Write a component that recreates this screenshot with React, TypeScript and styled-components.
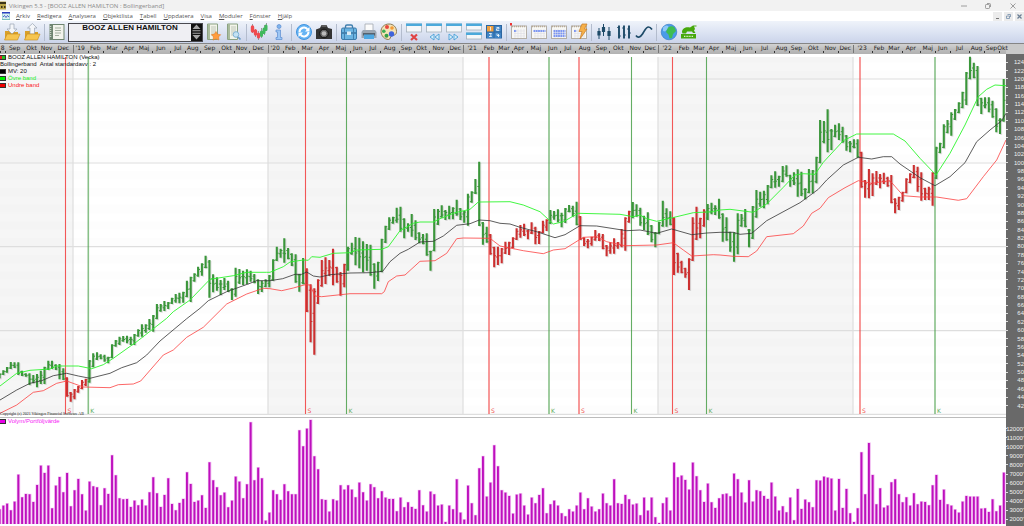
import React from "react";
import styled, { createGlobalStyle, css } from "styled-components";

const GlobalStyle = createGlobalStyle`
  *, *::before, *::after { box-sizing: border-box; }
  html, body { margin: 0; padding: 0; }
  body { background: #fff; font-family: Roboto, "Liberation Sans", sans-serif; font-size: 6px; overflow: hidden; }
  button, input { font: inherit; margin: 0; padding: 0; border: 0; background: none; color: inherit; }
`;

/* ---------- shell ---------- */

const Shell = styled.div`
  display: flex;
  flex-direction: column;
  height: 100vh;
  min-height: 400px;
`;

const TitleBar = styled.header`
  display: flex;
  align-items: center;
  flex: 0 0 11px;
  background: #f2f2f2;
  color: #8a8a8a;
`;

const AppTitle = styled.h1`
  flex: 1;
  margin: 0 0 0 2px;
  font-family: "Open Sans", sans-serif;
  font-size: 6px;
  line-height: 10px;
  font-weight: 400;
  white-space: nowrap;
`;

const WindowButtons = styled.div`
  display: flex;
  padding-right: 5px;
`;

const WindowButton = styled.button`
  display: grid;
  place-items: center;
  width: 24px;
  height: 10px;

  &:last-child { width: 12px; margin-left: 7px; }
`;

const MenuBar = styled.nav`
  display: flex;
  align-items: center;
  flex: 0 0 10px;
  background: #fff;
  padding-left: 2px;
`;

const Menus = styled.div`
  display: flex;
  flex: 1;
  gap: 7px;
  margin-left: 6px;
`;

const MenuButton = styled.button`
  font-family: "Open Sans", sans-serif;
  font-size: 6px;
  line-height: 10px;
  color: #555;
  white-space: nowrap;

  &::first-letter { text-decoration: underline; }
`;

const ChildButtons = styled.div`
  display: flex;
  gap: 2px;
`;

const ChildButton = styled.button`
  display: grid;
  place-items: center;
  width: 9px;
  height: 9px;
  background: #ececec;
`;

/* ---------- toolbar ---------- */

const ToolBar = styled.div`
  display: flex;
  align-items: center;
  flex: 0 0 22px;
  padding-left: 2px;
  background: linear-gradient(#eff3fa, #dde4f3 50%, #cbd4ea);
`;

const ToolButton = styled.button`
  display: grid;
  place-items: center;
  flex: 0 0 20px;
  height: 20px;
`;

const Separator = styled.span`
  flex: 0 0 1px;
  height: 17px;
  margin: 0 2px;
  background: #b3bccd;
`;

const ObjectPicker = styled.div`
  display: flex;
  flex: 0 0 135px;
  height: 19px;
  margin: 0 1px;
  border: 1px solid #4a4a50;
`;

const ObjectField = styled.input`
  flex: 1;
  min-width: 0;
  padding: 0 0 9px;
  background: #efeff3;
  font-family: "Liberation Sans", sans-serif;
  font-size: 8px;
  font-weight: 700;
  color: #111;
  text-align: center;
`;

const Stepper = styled.div`
  display: flex;
  flex-direction: column;
  flex: 0 0 11px;
  background: #111;
`;

const StepButton = styled.button`
  display: grid;
  place-items: center;
  flex: 1;
`;

/* ---------- time scale ---------- */

const TimeScale = styled.div`
  display: flex;
  flex: 0 0 11px;
  border-top: 1px solid #858585;
  background: linear-gradient(#d2d2d2, #bababa 60%, #b2b2b2);
`;

const Months = styled.div`
  display: flex;
  flex: 1;
  min-width: 0;
`;

const Month = styled.span<{ $weeks: number; $year?: boolean }>`
  flex: ${(p) => p.$weeks} 1 0;
  min-width: 0;
  display: flex;
  justify-content: center;
  position: relative;
  font-family: "DejaVu Sans", sans-serif;
  font-size: 6px;
  line-height: 7px;
  color: #222;
  white-space: nowrap;

  &::before {
    content: "";
    position: absolute;
    left: 0;
    bottom: 1px;
    width: 1px;
    height: 2px;
    background: #333;
    ${(p) => p.$year && css`height: 8px; background: #777;`}
  }
`;

const ScaleCorner = styled.span`
  flex: 0 0 18px;
  background: #c9c9c9;
`;

/* ---------- panels ---------- */

const Panel = styled.section<{ $share: number }>`
  display: flex;
  flex: ${(p) => p.$share} 1 0;
  min-height: 0;
`;

const Plot = styled.div`
  position: relative;
  flex: 1;
  min-width: 0;
  overflow: hidden;
  background: #fff;
`;

const Canvas = styled.svg`
  display: block;
  width: 100%;
  height: 100%;
`;

const Axis = styled.ol<{ $top: number; $bottom: number }>`
  display: flex;
  flex-direction: column;
  flex: 0 0 18px;
  margin: 0;
  padding: ${(p) => p.$top}px 0 ${(p) => p.$bottom}px;
  list-style: none;
  background: #696969;
  overflow: hidden;
`;

const AxisLabel = styled.li`
  flex: 1 1 0;
  min-height: 0;
  display: flex;
  align-items: center;
  justify-content: space-between;
  font-family: "Liberation Sans", sans-serif;
  font-size: 6px;
  line-height: 8px;
  color: #f0f0f0;

  &::before {
    content: "";
    flex: 0 1 2px;
    height: 1px;
    background: #ddd;
  }
`;

const Divider = styled.div`
  flex: 0 0 1px;
  background: linear-gradient(90deg, #bcbcbc calc(100% - 18px), #696969 calc(100% - 18px));
`;

const Legend = styled.div`
  position: absolute;
  top: 0;
  left: 0;
  font-family: "Liberation Sans", sans-serif;
  font-size: 6px;
  line-height: 7px;
`;

const LegendRow = styled.div<{ $color: string }>`
  display: flex;
  align-items: center;
  gap: 2px;
  color: ${(p) => p.$color};
  white-space: pre;
`;

const Swatch = styled.i<{ $fill: string }>`
  width: 6px;
  height: 5px;
  border: 1px solid #333;
  border-left: 0;
  background: ${(p) => p.$fill};
`;

const SignalTag = styled.span<{ $sell: boolean }>`
  position: absolute;
  bottom: 3px;
  margin-left: 2px;
  font-family: "DejaVu Sans", sans-serif;
  font-size: 6px;
  line-height: 7px;
  color: ${(p) => (p.$sell ? "#f05050" : "#60ac60")};
`;

const Copyright = styled.small`
  position: absolute;
  left: 0;
  bottom: 1px;
  font-family: "Liberation Serif", serif;
  font-size: 4px;
  line-height: 4px;
  color: #222;
  white-space: nowrap;
`;

/* ---------- data ---------- */

const WEEK = 3.747;
const FIRST = 3.3;
const xAt = (i: number) => FIRST + WEEK * i;

/* Weekly high/low in thirds of a pixel; each block has its own first week and vertical base. */
const blocks: { from: number; base: number; v: number[] }[] = [
  { from: -1, base: 230, v: [430,445,421,435,411,428,396,417,397,414,397,435,422,438,430,440,430,465,435,460,432,472,422,462,410,462,392,420,392,417,403,420,402,448,415,450,442,500,486,515,477,508,468,488,450,478,446,468,390,458,370,412,367,390,373,388,374,395,380,400,343,385,330,350,320,345,318,335,317,340,320,345,312,345,298,320,283,320,283,308,267,300,255,305,222,268,222,245,213,243,216,237,203,222,192,218,188,220,185,218,152,202,140,216,130,155,110,140,100,137,77,115,90,203,133,187,142,182,150,195,144,180,152,186,175,210,113,200,117,162,122,165,118,162,122,155,132,160,148,192,152,186,148,172,135,172] },
  { from: 72, base: 150, v: [328,392,290,333,296,323,265,338,294,328,310,348,313,398,372,425,324,403,355,486,403,577,415,614,388,462,330,410,322,402,330,378,296,406,350,398,366,437,341,412,290,362,278,314,261,346,263,355,274,367,282,362,284,377,340,416,335,393,266,367,227,279,202,240,200,221,173,218,170,245,205,265,220,245,192,260,211,270,247,280,252,283,250,317,302,362,177,304,177,225,166,203,180,210,167,208,172,208,149,197,174,210,183,218,131,227,124,158,87,132,35,228,216,284,230,278,252,314,290,352,290,345,294,340,275,312,275,315,262,295,235,270,225,263,221,258,240,268,217,252,230,283,243,282,212,250,208,243,180,222,183,209,178,217,188,232,174,219,165,187,167,200,155,226,198,270,262,288,267,295,260,287,240,272,250,273,252,298,285,319,277,311,265,311,276,296,237,292,202,302,182,218,156,205,163,200,173,227,197,240,187,255,225,277,246,292,215,253,152,230,175,230,184,226,202,375,308,368,332,370,353,383,325,420,202,333,170,270,203,265,178,230,162,210,158,193,166,195,146,206] },
  { from: 192, base: 50, v: [490,575,502,572,545,605,547,635,490,613,492,530,477,532,537,592,468,567,420,503,425,470,422,475,405,463,376,415,364,413,377,410,348,397,346,380,374,410,367,405,358,440,365,438,415,448,357,430,360,430,320,400,210,340,213,280,178,307,237,300,224,262,220,270,230,278,255,302,273,307,268,295,268,323,305,413,390,443,357,445,370,438,363,405,372,415,368,402,380,410,375,460,445,490,440,480,425,455,385,430,370,400,345,385,350,425,367,452,413,450,410,450,367,467,290,387,278,310,223,295,210,250,187,257,177,210,157,190,125,175,66,165,20,88,38,85,48,168,143,192,142,175,142,187,152,203,175,247,205,252,87,215] },
];

type Bar = { i: number; hi: number; lo: number };
const bars: Bar[] = blocks.flatMap((b) => {
  const out: Bar[] = [];
  for (let k = 0; k < b.v.length; k += 2) {
    out.push({ i: b.from + k / 2, hi: b.base + b.v[k] / 3, lo: b.base + b.v[k + 1] / 3 });
  }
  return out;
});

const sellRanges = [[17, 22], [81, 91], [130, 145], [154, 167], [179, 187], [229, 248]];
const isSell = (i: number) => sellRanges.some(([a, b]) => i >= a && i <= b);

const clamp = (v: number, a: number, b: number) => Math.max(a, Math.min(b, v));

const rangePath = (sell: boolean) =>
  bars
    .filter((b) => isSell(b.i) === sell)
    .map((b) => `M${xAt(b.i).toFixed(1)} ${b.hi.toFixed(1)}V${b.lo.toFixed(1)}`)
    .join("");

const tickPath = (sell: boolean) =>
  bars
    .map((b, n) => {
      if (isSell(b.i) !== sell) return "";
      const x = xAt(b.i);
      const prev = bars[n - 1] ?? b;
      const next = bars[n + 1] ?? b;
      const open = clamp((prev.hi + prev.lo) / 2, b.hi + 1, b.lo - 1);
      const close = clamp((next.hi + next.lo) / 2, b.hi + 1, b.lo - 1);
      return `M${(x - 1.8).toFixed(1)} ${open.toFixed(1)}h1.8M${x.toFixed(1)} ${close.toFixed(1)}h1.8`;
    })
    .join("");

/* Curve pieces: horizontal offset, vertical offset, then x,y pairs in thirds of a pixel. */
type Piece = [number, number, number[]];
const curve = (pieces: Piece[]) =>
  pieces
    .flatMap(([ox, oy, v]) => {
      const pts: string[] = [];
      for (let k = 0; k < v.length; k += 2) pts.push(`${(ox + v[k] / 3).toFixed(1)},${(oy + v[k + 1] / 3).toFixed(1)}`);
      return pts;
    })
    .join(" ");

const middle = curve([
  [0, 230, [0,510,50,480,90,460,125,452,160,437,200,430,235,438,270,445,330,430,365,413,410,398,440,375,480,333,560,266,600,235,625,212,680,185,750,160,770,152]],
  [270, 150, [0,392,38,386,75,373,95,373,110,366,130,378,150,381,180,374,240,369,300,368,338,364,360,335,390,310,415,298,450,276,490,274,520,258,560,226,600,221,628,210,660,212,690,220,720,222]],
  [480, 150, [120,232,170,245,225,263,255,254,300,227,350,228,440,242,480,240,530,250,575,237,635,254,680,249]],
  [720, 50, [0,547,40,547,60,553,95,550,140,512,240,458,295,418,320,390,370,345,415,322,455,327,490,320,515,320,540,342,600,383,645,407,690,380,735,338,770,275,810,240,845,212,858,190]],
]);
const upper = curve([
  [0, 230, [0,468,50,430,90,421,150,417,170,408,235,408,275,416,310,404,340,385,410,335,500,265,520,245,570,210,630,148,700,137,740,127]],
  [270, 150, [-10,367,0,367,40,350,60,336,100,330,115,331,125,320,150,322,190,310,240,308,260,300,335,298,355,290,390,242,430,220,450,216,490,216,510,206,555,188,600,178,625,156]],
  [480, 150, [0,156,90,155,130,165,180,185,220,222,250,215,295,190,420,193,460,200,480,195,500,206,530,214,570,205,640,188,700,185]],
  [720, 50, [0,480,30,478,100,487,140,462,190,412,225,375,250,371,285,373,310,337,370,272,410,252,520,252,555,273,600,325,648,375,690,310,735,225,775,140,800,118,825,105,858,107]],
]);
const lower = curve([
  [0, 230, [0,550,50,525,100,487,130,482,170,460,200,453,250,471,330,473,355,464,400,462,422,453,490,375,520,360,560,322,610,292,680,222,740,192,790,175]],
  [270, 150, [0,416,35,422,70,414,105,404,120,405,135,438,155,440,240,431,335,431,343,425,355,395,380,378,405,375,450,334,495,332,530,310,560,266,580,264]],
  [480, 150, [30,265,60,288,130,302,190,311,220,300,255,296,310,262,350,260,380,275,435,287,530,285,580,278,610,300,635,318,700,314]],
  [720, 50, [0,615,40,619,85,620,110,603,140,560,220,551,250,528,275,490,300,475,325,443,375,413,415,392,455,400,510,392,550,437,600,441,650,441,715,451,740,446,790,380,830,330,858,270]],
]);

/* Tops of the volume columns in thirds of a pixel. */
const volume = [313,302,296,316,290,209,277,267,268,291,240,182,204,182,310,242,216,262,204,304,256,222,268,317,230,244,247,301,250,267,151,211,280,283,282,306,287,301,284,302,262,217,265,306,270,220,297,316,294,282,202,237,291,287,271,309,172,226,247,271,263,307,287,215,230,280,238,52,226,188,220,347,323,256,268,285,238,259,268,268,76,124,71,45,154,193,283,285,320,283,287,241,254,241,254,277,233,262,287,238,247,280,259,278,282,282,319,278,307,292,306,312,256,301,320,260,268,302,299,351,302,313,223,323,344,242,295,331,190,154,275,233,121,184,256,263,273,326,269,266,302,329,278,295,270,250,325,298,287,302,325,334,313,320,302,263,313,280,305,320,313,266,295,302,223,295,297,270,283,299,296,331,278,317,278,337,354,295,278,317,173,217,212,225,254,173,214,256,291,236,292,309,280,268,266,274,206,223,263,293,226,290,256,259,273,282,233,275,317,304,322,278,346,252,312,284,292,307,226,227,215,218,221,317,222,309,252,325,351,310,142,268,114,210,298,250,308,302,232,223,268,292,277,302,265,298,290,291,301,241,210,285,254,298,302,314,323,290,273,275,275,275,311,310,321,283,319,302,203];

const signals: { x: number; kind: "S" | "K"; soft?: boolean }[] = [
  { x: 65.5, kind: "S" }, { x: 88.3, kind: "K", soft: true }, { x: 305.5, kind: "S" },
  { x: 346.5, kind: "K" }, { x: 489, kind: "S", soft: true }, { x: 549, kind: "K", soft: true },
  { x: 579, kind: "S", soft: true }, { x: 631.5, kind: "K" }, { x: 672.5, kind: "S" },
  { x: 706.5, kind: "K" }, { x: 860, kind: "S", soft: true }, { x: 935, kind: "K", soft: true },
];

const months: [string, number][] = [
  ["8", 1.4], ["Sep", 5], ["Okt", 4], ["Nov", 4], ["Dec", 5],
  ["'19", 4], ["Feb", 4], ["Mar", 5], ["Apr", 4], ["Maj", 4], ["Jun", 5], ["Jul", 4], ["Aug", 4], ["Sep", 5], ["Okt", 4], ["Nov", 4], ["Dec", 5],
  ["'20", 4], ["Feb", 4], ["Mar", 5], ["Apr", 4], ["Maj", 5], ["Jun", 4], ["Jul", 4], ["Aug", 5], ["Sep", 4], ["Okt", 4], ["Nov", 5], ["Dec", 4],
  ["'21", 5], ["Feb", 4], ["Mar", 4], ["Apr", 4], ["Maj", 5], ["Jun", 4], ["Jul", 4], ["Aug", 5], ["Sep", 4], ["Okt", 5], ["Nov", 4], ["Dec", 4],
  ["'22", 5], ["Feb", 4], ["Mar", 4], ["Apr", 4], ["Maj", 5], ["Jun", 4], ["Jul", 5], ["Aug", 4], ["Sep", 4], ["Okt", 5], ["Nov", 4], ["Dec", 4],
  ["'23", 5], ["Feb", 4], ["Mar", 4], ["Apr", 5], ["Maj", 4], ["Jun", 4], ["Jul", 5], ["Aug", 4], ["Sep", 4], ["Okt", 1.9],
];

const menus = ["Arkiv", "Redigera", "Analysera", "Objektlista", "Tabell", "Uppdatera", "Visa", "Moduler", "Fönster", "Hjälp"];
const prices = Array.from({ length: 42 }, (_, n) => 124 - 2 * n);
const volumes = Array.from({ length: 11 }, (_, n) => `${12000 - 1000 * n}'`);

/* ---------- icons ---------- */

const Icon = ({ children }: { children: React.ReactNode }) => (
  <svg width="18" height="18" viewBox="0 0 18 18" aria-hidden="true">{children}</svg>
);

const Folder = ({ up }: { up?: boolean }) => (
  <Icon>
    <path d="M2 8h5l1 1h7v7H2z" fill="#d9a02a" />
    <path d={up ? "M7 11V5H4.500L9.500 0.500 14 5H11.500V11z" : "M7 1h4v5h3L9 11 4 6h3z"} fill="#f4f6f9" stroke="#9aa5b3" strokeWidth=".7" />
    <path d="M4 11h13l-2.500 6H1.500z" fill="#f6c550" stroke="#c48a1c" strokeWidth=".6" />
  </Icon>
);

const Sheet = ({ extra }: { extra: "star" | "lens" }) => (
  <Icon>
    <path d="M2.500 1h10v15.500h-10z" fill="#f2f4ea" stroke="#8ba283" />
    <path d="M3 1h2v15H3z" fill="#a9bb9d" />
    <path d="M6 4h5M6 6h5M6 8h5M6 10h5M6 12h4" stroke="#b4bcae" strokeWidth=".8" />
    {extra === "star" ? (
      <path d="M11 8.500l1.600 2.700 3.100.5-2.100 2.200.4 3.100-3-1.200-2.900 1.300.3-3.200-2-2.300 3-.5z" fill="#ff9d3c" stroke="#de7418" strokeWidth=".5" />
    ) : (
      <>
        <circle cx="11" cy="11.500" r="2.800" fill="#c4e2f3" stroke="#7fb3d6" />
        <path d="M13 14l2.500 2.500" stroke="#6a9dc8" strokeWidth="1.700" />
      </>
    )}
  </Icon>
);

const MiniWindow = ({ y, h = 6 }: { y: number; h?: number }) => (
  <>
    <rect x="1.500" y={y} width="15" height={h} fill="#f5f7f9" stroke="#a6b1bb" strokeWidth=".8" />
    <rect x="1" y={y - 0.5} width="16" height="2.500" fill="#4ba9db" />
  </>
);

const Calendar = ({ rows, children }: { rows: string; children?: React.ReactNode }) => (
  <Icon>
    <rect x="1.500" y="3" width="15" height="12.500" fill="#f7f7f5" stroke="#b3aea5" />
    <path d="M2 3.500h14" stroke="#b8aa94" strokeWidth="1.500" strokeDasharray="1 1" />
    <path d="M4 8h11M4 10.500h11M4 13h11M5 6v9M8 6v9M11 6v9M14 6v9" stroke="#dcdce4" strokeWidth=".6" />
    <path d={rows} stroke="#7c96f2" strokeWidth="1.900" strokeDasharray="1.800 .5" />
    {children}
  </Icon>
);

const icons: Record<string, React.ReactNode> = {
  "Öppna": <Folder />,
  "Spara": <Folder up />,
  "Objektlista": (
    <Icon>
      <rect x="1.500" y="1" width="15" height="16" fill="#6f8571" />
      <rect x="5" y="2" width="10.500" height="14" fill="#f2f3ec" />
      <path d="M2.500 3v12" stroke="#c9d3c6" strokeWidth="1.500" strokeDasharray="1 1" />
      <path d="M7 5h6M7 7.500h6M7 10h6M7 12.500h4" stroke="#a4b0a0" />
    </Icon>
  ),
  "Favoriter": <Sheet extra="star" />,
  "Sök objekt": <Sheet extra="lens" />,
  "Diagram": (
    <Icon>
      <path d="M2.500 1v9M5.500 6v8M8.500 8v9M11.500 5v10M14.500 2v10M16.500 0v8" stroke="#777" strokeWidth=".7" />
      <path d="M2.500 4v4M5.500 8v3" stroke="#ef4b4f" strokeWidth="3.400" strokeLinecap="round" />
      <path d="M8.500 11v3" stroke="#ef4b4f" strokeWidth="3.200" strokeLinecap="round" />
      <path d="M11.500 9v3.500M14 6v3.500M16 3v3.500" stroke="#3fb85c" strokeWidth="3" strokeLinecap="round" />
    </Icon>
  ),
  "Information": (
    <Icon>
      <circle cx="9" cy="3.500" r="2" fill="#7fb4ee" stroke="#5c8cd0" strokeWidth=".7" />
      <path d="M6 7h4.500v7.500H12V16.500H6V14.500h1.500V9H6z" fill="#9cc6f5" stroke="#5c8cd0" strokeWidth=".7" />
    </Icon>
  ),
  "Uppdatera": (
    <Icon>
      <circle cx="9" cy="9" r="7.500" fill="#66b4f4" stroke="#4194e0" />
      <path d="M4.500 9a4.500 4.500 0 0 1 8.300-2.300M13.500 9a4.500 4.500 0 0 1-8.300 2.300" fill="none" stroke="#fff" strokeWidth="2" />
      <path d="M14.500 4v4.500h-4.500zM3.500 14V9.500H8z" fill="#fff" />
    </Icon>
  ),
  "Kamera": (
    <Icon>
      <path d="M1 6.500L5 5l1.500-3h5L13 5l4 1v10H1z" fill="#333" />
      <path d="M6.500 3h5" stroke="#888" />
      <circle cx="9" cy="10.500" r="4.300" fill="#666" stroke="#111" />
      <circle cx="9" cy="10.500" r="2.300" fill="#bbb" />
    </Icon>
  ),
  "Portfölj": (
    <Icon>
      <path d="M5.500 6V3.500Q5.500 2 7 2h4q1.500 0 1.500 1.500V6" fill="none" stroke="#3f7fae" strokeWidth="1.400" />
      <rect x="1.500" y="5" width="15" height="11.500" rx="1.500" fill="#6ab4e2" stroke="#3c7cac" />
      <path d="M2 10h14" stroke="#2a6391" strokeWidth="1.200" />
      <path d="M4.500 5v11M13.500 5v11" stroke="#447fae" />
      <rect x="7" y="8.500" width="4" height="3.500" fill="#dceaf4" />
    </Icon>
  ),
  "Skriv ut": (
    <Icon>
      <path d="M5 1h8v7H5z" fill="#fbfbfb" stroke="#a2a8b0" strokeWidth=".8" />
      <path d="M3 7h12l1.500 2v6h-15V9z" fill="#9aa6b2" />
      <path d="M3 10h12v2.500H3z" fill="#56626e" />
      <path d="M4 11.500h10v4.500H4z" fill="#4ea8e2" />
    </Icon>
  ),
  "Färger": (
    <Icon>
      <path d="M9 1C4 1 1 4.500 1 8.500S4.500 16.500 8.500 16.500c2 0 1.500-2.500 3-3.500s5-.2 5-4.500S13.500 1 9 1z" fill="#f3e3b6" stroke="#8b7a52" />
      <circle cx="7" cy="4" r="2" fill="#e9483f" />
      <circle cx="12" cy="5" r="1.800" fill="#f29b3a" />
      <circle cx="3.800" cy="8.300" r="1.800" fill="#3eae55" />
      <circle cx="6.500" cy="12.800" r="2" fill="#35a046" />
      <circle cx="11.500" cy="11" r="2.700" fill="#3f64dc" />
    </Icon>
  ),
  "Stäng fönster": (
    <Icon>
      <MiniWindow y={1} h={8} />
      <path d="M6 11.500l6 5.500M12 11.500L6 17" stroke="#e04444" strokeWidth="2.200" />
    </Icon>
  ),
  "Föregående": (
    <Icon>
      <MiniWindow y={1} h={8} />
      <path d="M9 11v6l-4-3zM14 11v6l-4-3z" fill="#d5eefb" stroke="#4a9fd6" strokeWidth=".9" />
    </Icon>
  ),
  "Nästa": (
    <Icon>
      <MiniWindow y={1} h={8} />
      <path d="M4 11v6l4-3zM9 11v6l4-3z" fill="#d5eefb" stroke="#4a9fd6" strokeWidth=".9" />
    </Icon>
  ),
  "Dela fönster": (
    <Icon>
      <MiniWindow y={1} />
      <MiniWindow y={10} />
    </Icon>
  ),
  "Rutnät": (
    <Icon>
      <rect x="1" y="2" width="16" height="13.500" fill="#2c659f" />
      <rect x="2" y="3" width="6.500" height="5.500" fill="#f0a040" />
      <path d="M9.500 3H16v5.500H9.500zM2 9.500h6.500V15H2zM9.500 9.500H16V15H9.500z" fill="#3f84c6" />
      <path d="M5.500 4v3.500M11.500 4.500h2.500v1.300h-2.500v1.600h2.800M4 10.500h2.500l-1 1.500 1 1.500H4M12 10.500v2h2.500M13.500 11v3" fill="none" stroke="#e9f1f8" strokeWidth=".9" />
    </Icon>
  ),
  "Dag": <Calendar rows="M4 8h2.500"><rect x="0" y="0" width="2" height="2.500" fill="#e33" /></Calendar>,
  "Vecka": <Calendar rows="M3.500 8h12" />,
  "Månad": <Calendar rows="M3.500 8h12M3.500 10.500h12M3.500 13h12" />,
  "Intradag": (
    <Calendar rows="M4 8h2.500">
      <path d="M12 1h5l-2.500 5H17l-7 10 2-7.500H9z" fill="#f6b04a" stroke="#c67d25" strokeWidth=".7" />
    </Calendar>
  ),
  "Ljusstake": (
    <Icon>
      <path d="M4 5v11M8.500 1v12M14 4v13" stroke="#1d4a68" />
      <path d="M4 8v4.500M8.500 4v5M14 8v5" stroke="#1d4a68" strokeWidth="3.200" />
    </Icon>
  ),
  "Stapel": (
    <Icon>
      <path d="M4 2.500v13M9 2.500v13M14 2.500v13" stroke="#1d4a68" strokeWidth="1.900" />
      <path d="M2 4.500h2M4 13h2M7 5h2M9 12h2M12 6h2M14 10h2" stroke="#1d4a68" strokeWidth=".8" />
    </Icon>
  ),
  "Linje": (
    <Icon>
      <path d="M1 12.500c2 3 4.500 1.500 6.500-1.500s3.500-7 6-7c2 0 2.500 1 3.500 2.500" fill="none" stroke="#1d4a68" strokeWidth="1.700" />
    </Icon>
  ),
  "Internet": (
    <Icon>
      <circle cx="9" cy="9" r="7.800" fill="#4a9be8" stroke="#2f74c0" strokeWidth=".6" />
      <path d="M3 4.500Q6 1.500 8 3L9 5 6.500 7 5 8.500 3 8z" fill="#8cc9f8" />
      <path d="M8 4.500q4-2.500 6.500 0L16 8l-3 3-1 4-2.500.5-1-4L6 9z" fill="#3fbd52" />
    </Icon>
  ),
  "Börs": (
    <Icon>
      <path d="M2 9c0-3.500 4-5.500 8-4.500l3-2h3.500v1H14l1 2.500-1 1.500 1.500 2.500H13l-1-1.500H7L6 10.500H2.500z" fill="#46a80c" />
      <path d="M1 11h15v4.500H1z" fill="#46a80c" />
      <path d="M4 13.300h9" stroke="#d9f2c6" strokeWidth="1.200" strokeDasharray="1 .6" />
    </Icon>
  ),
};

const toolGroupsBefore = [["Öppna", "Spara"], ["Objektlista"]];
const toolGroupsAfter = [
  ["Favoriter", "Sök objekt"],
  ["Diagram", "Information"],
  ["Uppdatera", "Kamera"],
  ["Portfölj", "Skriv ut", "Färger"],
  ["Stäng fönster", "Föregående", "Nästa", "Dela fönster", "Rutnät"],
  ["Dag", "Vecka", "Månad", "Intradag"],
  ["Ljusstake", "Stapel", "Linje"],
  ["Internet", "Börs"],
];

const ToolGroups = ({ groups }: { groups: string[][] }) => (
  <>
    {groups.map((group, n) => (
      <React.Fragment key={n}>
        {n > 0 && <Separator />}
        {group.map((name) => (
          <ToolButton key={name} type="button" aria-label={name}>{icons[name]}</ToolButton>
        ))}
      </React.Fragment>
    ))}
  </>
);

/* ---------- charts ---------- */

const PriceChart = () => {
  const rising = rangePath(false);
  const falling = rangePath(true);
  return (
    <Canvas viewBox="0 54 1006 363" preserveAspectRatio="none" role="img" aria-label="Veckokurs med Bollingerband">
      <defs>
        <pattern id="rows" width="20" height="16.740" y="54" patternUnits="userSpaceOnUse">
          <rect width="20" height="8.370" fill="#000" opacity=".008" />
        </pattern>
      </defs>
      <path d="M0 57h73v357H0zM268 57h195v357H268zM658 57h195v357H658z" fill="#f6f6f6" />
      <rect y="57" width="1006" height="357" fill="url(#rows)" />
      <path d="M73 57v357M268 57v357M463 57v357M658 57v357M853 57v357" stroke="#dedede" strokeWidth="1.200" />
      <path d="M0 79h1006M0 163h1006M0 246.700h1006M0 330.600h1006M0 414.300h1006" stroke="#dedede" strokeWidth="1.200" />
      {signals.map((s) => (
        <path
          key={s.x}
          d={`M${s.x} 57V414`}
          stroke={s.kind === "S" ? "#f23c3c" : "#4aa04a"}
          strokeWidth={s.soft ? 1.6 : 1.1}
          opacity={s.soft ? 0.65 : 0.85}
        />
      ))}
      <g fill="none">
        <path d={rising + falling} stroke="#000" strokeWidth="2.200" opacity=".12" transform="translate(1 1)" />
        <path d={tickPath(false)} stroke="#3a963a" strokeWidth="1" />
        <path d={tickPath(true)} stroke="#cc3030" strokeWidth="1" />
        <path d={rising} stroke="#3a963a" strokeWidth="2.100" />
        <path d={falling} stroke="#cc3030" strokeWidth="2.100" />
        <polyline points={upper} stroke="#2cf52c" strokeWidth=".9" />
        <polyline points={middle} stroke="#333" strokeWidth=".8" />
        <polyline points={lower} stroke="#fb4040" strokeWidth=".8" />
      </g>
    </Canvas>
  );
};

const VolumeChart = () => (
  <Canvas viewBox="0 418 1006 108" preserveAspectRatio="none" role="img" aria-label="Volym per vecka">
    {volume.map((top, n) => {
      const y = 405 + top / 3;
      const x = xAt(n - 1);
      return (
        <g key={n}>
          <rect x={x - 1.5} y={y - 0.5} width="3.400" height={524.5 - y} fill="#f0b4f0" />
          <rect x={x - 0.9} y={y} width="1.900" height={524 - y} fill="#bd10bd" />
        </g>
      );
    })}
  </Canvas>
);

export default function App() {
  return (
    <Shell>
      <GlobalStyle />
      <TitleBar>
        <svg width="7" height="9" viewBox="0 0 7 9" aria-hidden="true">
          <rect width="6" height="8" y=".5" fill="#b9a44a" />
          <path d="M0 1h6v2H0zM1 5h1.500v2H1zM4 5h1.500v2H4z" fill="#3c3518" />
        </svg>
        <AppTitle>Vikingen 5.3 - [BOOZ ALLEN HAMILTON : Bollingerband]</AppTitle>
        <WindowButtons>
          <WindowButton type="button" aria-label="Minimera">
            <svg width="6" height="6"><path d="M0 3h6" stroke="#888" strokeWidth=".8" /></svg>
          </WindowButton>
          <WindowButton type="button" aria-label="Återställ">
            <svg width="6" height="6" fill="none" stroke="#888" strokeWidth=".8"><rect x=".5" y="1.500" width="4" height="4" rx=".8" /><path d="M2 .5h2.500q1 0 1 1V4" /></svg>
          </WindowButton>
          <WindowButton type="button" aria-label="Stäng">
            <svg width="6" height="6"><path d="M.5.500l5 5M5.500.500l-5 5" stroke="#888" strokeWidth=".8" /></svg>
          </WindowButton>
        </WindowButtons>
      </TitleBar>

      <MenuBar>
        <svg width="8" height="8" viewBox="0 0 8 8" aria-hidden="true">
          <rect width="8" height="7" y=".5" fill="#d7efef" stroke="#2f9a9a" strokeWidth=".6" />
          <rect width="8" height="1.500" fill="#2a3fc0" />
          <path d="M1 5l1.500-1.500L4 5.500l1.500-2L7 5" fill="none" stroke="#2a3fc0" strokeWidth=".8" />
        </svg>
        <Menus>
          {menus.map((m) => <MenuButton key={m} type="button">{m}</MenuButton>)}
        </Menus>
        <ChildButtons>
          <ChildButton type="button" aria-label="Minimera diagram">
            <svg width="5" height="5"><path d="M1 4.500h3" stroke="#777" /></svg>
          </ChildButton>
          <ChildButton type="button" aria-label="Återställ diagram">
            <svg width="5" height="5" fill="none" stroke="#7690ac" strokeWidth=".8"><path d="M.5 2h3v2.500h-3zM1.500.500h3V3" /></svg>
          </ChildButton>
          <ChildButton type="button" aria-label="Stäng diagram">
            <svg width="5" height="5"><path d="M.5.500l4 4M4.500.500l-4 4" stroke="#6c7f94" strokeWidth="1.200" /></svg>
          </ChildButton>
        </ChildButtons>
      </MenuBar>

      <ToolBar role="toolbar" aria-label="Verktyg">
        <ToolGroups groups={toolGroupsBefore} />
        <ObjectPicker>
          <ObjectField aria-label="Objekt" defaultValue="BOOZ ALLEN HAMILTON" />
          <Stepper>
            <StepButton type="button" aria-label="Föregående objekt">
              <svg width="9" height="8"><path d="M.5 5l4-4.500 4 4.500zM.5 6.300h8v1h-8z" fill="#a5a5a5" /></svg>
            </StepButton>
            <StepButton type="button" aria-label="Nästa objekt">
              <svg width="9" height="8"><path d="M.5.700h8v1h-8zM.5 3l4 4.500 4-4.500z" fill="#a5a5a5" /></svg>
            </StepButton>
          </Stepper>
        </ObjectPicker>
        <ToolGroups groups={toolGroupsAfter} />
      </ToolBar>

      <TimeScale>
        <Months>
          {months.map(([name, weeks], n) => (
            <Month key={n} $weeks={weeks} $year={name.startsWith("'")}>{name}</Month>
          ))}
        </Months>
        <ScaleCorner />
      </TimeScale>

      <Panel $share={363}>
        <Plot>
          <PriceChart />
          <Legend>
            <LegendRow $color="#111"><Swatch $fill="linear-gradient(90deg, #e02020 50%, #20c020 50%)" />BOOZ ALLEN HAMILTON (Vecka)</LegendRow>
            <LegendRow $color="#111">{"Bollingerband  Antal standardavv : 2"}</LegendRow>
            <LegendRow $color="#111"><Swatch $fill="#000" />MV: 20</LegendRow>
            <LegendRow $color="#19f019"><Swatch $fill="#00f000" />Övre band</LegendRow>
            <LegendRow $color="#fa2020"><Swatch $fill="#f00000" />Undre band</LegendRow>
          </Legend>
          {signals.map((s) => (
            <SignalTag key={s.x} $sell={s.kind === "S"} style={{ left: `${(s.x / 1006) * 100}%` }}>{s.kind}</SignalTag>
          ))}
          <Copyright>Copyright (c) 2021 Vikingen Financial Software AB</Copyright>
        </Plot>
        <Axis $top={4} $bottom={7}>
          {prices.map((p) => <AxisLabel key={p}>{p}</AxisLabel>)}
        </Axis>
      </Panel>
      <Divider />
      <Panel $share={108}>
        <Plot>
          <VolumeChart />
          <Legend>
            <LegendRow $color="#f520f5"><Swatch $fill="#e800e8" />Volym/Portföljvärde</LegendRow>
          </Legend>
        </Plot>
        <Axis $top={6} $bottom={2}>
          {volumes.map((v) => <AxisLabel key={v}>{v}</AxisLabel>)}
        </Axis>
      </Panel>
    </Shell>
  );
}
